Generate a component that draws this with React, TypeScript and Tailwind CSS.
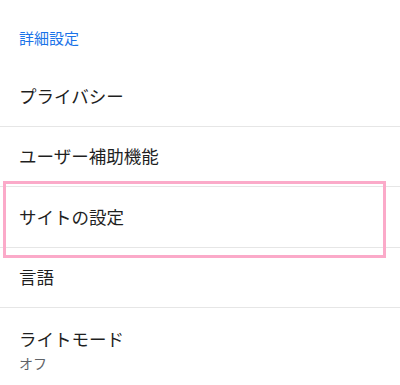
const rows = ['プライバシー', 'ユーザー補助機能', 'サイトの設定', '言語'];

export default function App() {
  return (
    <div
      className="relative w-[400px] h-[385px] overflow-hidden bg-white text-[#1f1f1f]"
      style={{ fontFamily: '"Noto Sans CJK JP", "Noto Sans", sans-serif' }}
    >
      <div className="h-[66px] pl-[19px] pt-[25px]">
        <span className="text-[15px] leading-[22px] text-[#1a73e8]">詳細設定</span>
      </div>
      {rows.map((label) => (
        <div
          key={label}
          className="h-[60.5px] flex items-center pl-[19px] border-b border-[#e6e6e6] text-[17.5px]"
        >
          {label}
        </div>
      ))}
      <div className="pl-[19px] pt-[19px] flex flex-col">
        <span className="text-[17.5px] leading-[24px]">ライトモード</span>
        <span className="mt-[2px] text-[14px] leading-[20px] text-[#5f6368]">オフ</span>
      </div>
      <div className="absolute left-[3px] top-[181px] w-[383px] h-[77px] border-[3px] border-[#fbaac9]" />
    </div>
  );
}
